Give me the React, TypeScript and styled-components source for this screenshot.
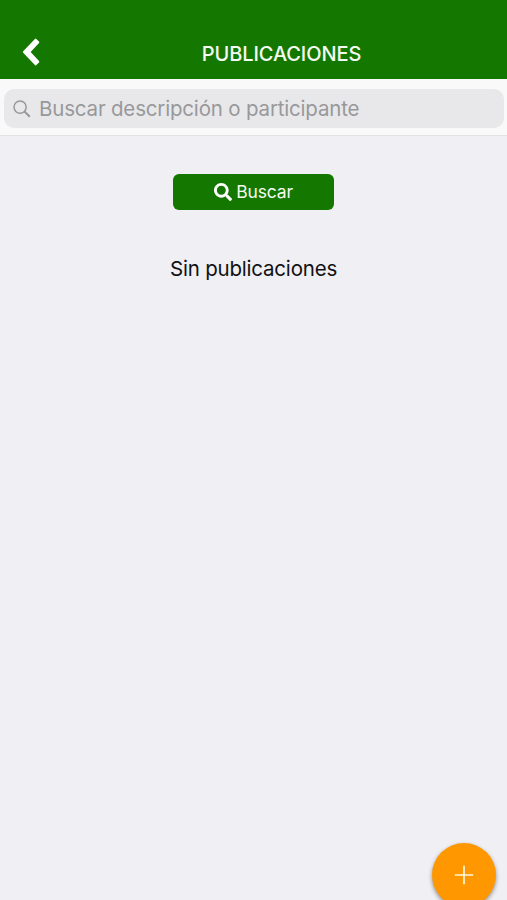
import React from 'react';
import styled, { createGlobalStyle } from 'styled-components';

const GlobalStyle = createGlobalStyle`
  * { box-sizing: border-box; }
  body { margin: 0; overflow: hidden; }
`;

const Screen = styled.div`
  position: relative;
  display: flex;
  flex-direction: column;
  height: 100vh;
  overflow: hidden;
  background: #efeff4;
  font-family: Inter, Roboto, sans-serif;
`;

const Header = styled.header`
  display: grid;
  grid-template-columns: 56px 1fr;
  align-items: center;
  height: 79px;
  padding-top: 25px;
  background: #147800;
`;

const BackButton = styled.button`
  display: flex;
  justify-content: flex-end;
  width: 41px;
  padding: 0;
  border: 0;
  background: none;
`;

const Title = styled.h1`
  margin: 0;
  padding-top: 3px;
  color: #f4fbf2;
  font-size: 20px;
  font-weight: 500;
  line-height: 24px;
  letter-spacing: -0.1px;
  text-align: center;
`;

const SearchBar = styled.div`
  height: 57px;
  padding: 10px 3px 7px 4px;
  border-bottom: 1px solid #e3e3e6;
  background: #f9f9fa;
`;

const SearchField = styled.label`
  display: flex;
  align-items: center;
  gap: 8px;
  height: 39px;
  padding-left: 9px;
  border-radius: 10px;
  background: #e8e8ea;
`;

const SearchInput = styled.input`
  flex: 1;
  min-width: 0;
  padding: 0;
  border: 0;
  outline: 0;
  background: none;
  color: #111;
  font: 400 20.5px/26px Inter, Roboto, sans-serif;
  letter-spacing: -0.18px;
  &::placeholder { color: #98989b; opacity: 1; }
`;

const Content = styled.main`
  display: flex;
  flex: 1;
  flex-direction: column;
  align-items: center;
  padding-top: 38px;
`;

const SearchButton = styled.button`
  display: flex;
  align-items: center;
  justify-content: center;
  gap: 4px;
  width: 161px;
  height: 36px;
  padding: 0;
  border: 0;
  border-radius: 6px;
  background: #147800;
  color: #f4fbf2;
  font: 400 17.5px/22px Inter, Roboto, sans-serif;
  letter-spacing: -0.15px;
`;

const EmptyMessage = styled.p`
  margin: 45px 0 0;
  color: #111113;
  font-size: 20.5px;
  line-height: 27px;
  letter-spacing: -0.2px;
`;

const AddButton = styled.button`
  position: absolute;
  right: 11px;
  bottom: -7px;
  display: flex;
  align-items: center;
  justify-content: center;
  width: 64px;
  height: 64px;
  padding: 0;
  border: 0;
  border-radius: 50%;
  background: #ff9800;
  box-shadow: 0 2px 4px rgba(0, 0, 0, 0.4);
`;

export default function App() {
  return (
    <Screen>
      <GlobalStyle />
      <Header>
        <BackButton aria-label="Volver">
          <svg width="19" height="28" viewBox="0 0 19 28" fill="#fff" stroke="#fff" strokeWidth="2" strokeLinejoin="round">
            <path d="M13.600 1.600 1.900 14l11.700 12.400 2.700-2.700L7.200 14l9.100-9.700z" />
          </svg>
        </BackButton>
        <Title>PUBLICACIONES</Title>
      </Header>
      <SearchBar>
        <SearchField>
          <svg width="18" height="18" viewBox="0 0 18 18" fill="none" stroke="#98989b" strokeWidth="1.5">
            <circle cx="7.1" cy="7.1" r="6.1" />
            <path d="m11.5 11.5 5.3 5.2" strokeWidth="2" />
          </svg>
          <SearchInput placeholder="Buscar descripción o participante" />
        </SearchField>
      </SearchBar>
      <Content>
        <SearchButton>
          <svg width="18" height="18" viewBox="0 0 512 512" fill="#fff">
            <path d="M505 442.7 405.3 343c-4.500-4.500-10.600-7-17-7H372c27.600-35.300 44-79.700 44-128C416 93.100 322.900 0 208 0S0 93.100 0 208s93.100 208 208 208c48.300 0 92.700-16.400 128-44v16.300c0 6.400 2.500 12.500 7 17l99.700 99.700c9.400 9.400 24.600 9.400 33.900 0l28.300-28.300c9.400-9.400 9.400-24.600.1-34zM208 336c-70.700 0-128-57.200-128-128 0-70.700 57.200-128 128-128 70.700 0 128 57.200 128 128 0 70.700-57.200 128-128 128z" />
          </svg>
          Buscar
        </SearchButton>
        <EmptyMessage>Sin publicaciones</EmptyMessage>
      </Content>
      <AddButton aria-label="Agregar">
        <svg width="20" height="20" viewBox="0 0 20 20" stroke="#fff8df" strokeWidth="1.7">
          <path d="M10 .8v18.400M.8 10h18.400" />
        </svg>
      </AddButton>
    </Screen>
  );
}
